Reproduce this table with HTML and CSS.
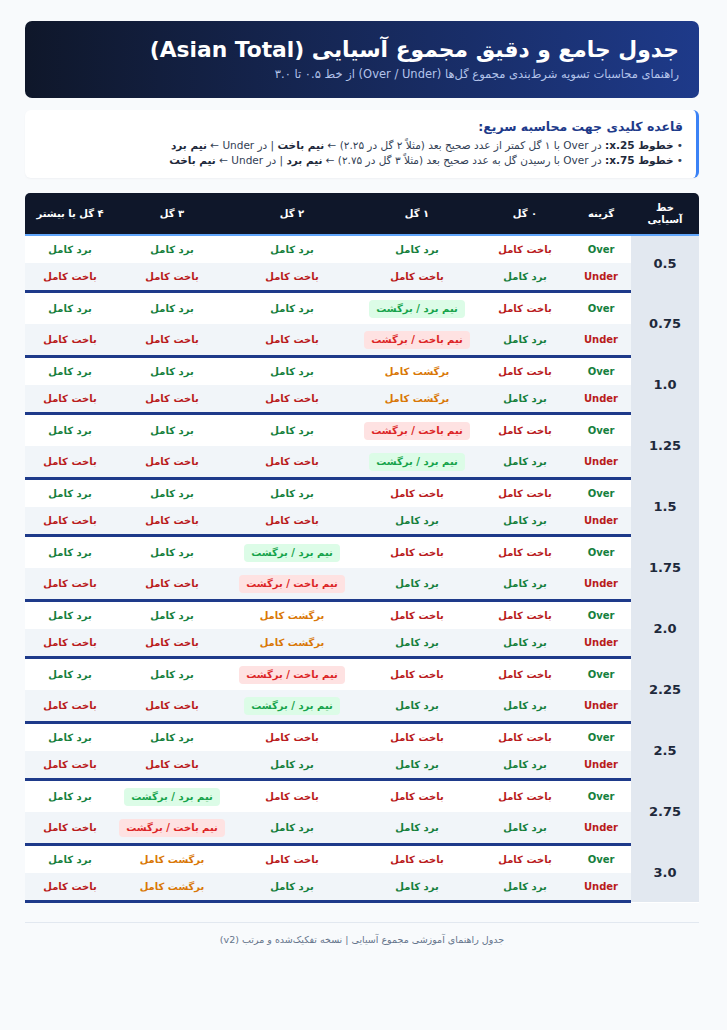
FILE: index.html
```html
<!DOCTYPE html>
<html lang="fa" dir="rtl">
<head>
<meta charset="utf-8">
<title>جدول مجموع آسیایی</title>
<link rel="stylesheet" href="styles.css">
</head>
<body>
<div class="page">
  <header class="hero">
    <h1 class="hero-title">جدول جامع و دقیق مجموع آسیایی (Asian Total)</h1>
    <p class="hero-sub">راهنمای محاسبات تسویه شرط‌بندی مجموع گل‌ها (Over / Under) از خط ۰.۵ تا ۳.۰</p>
  </header>

  <section class="rule">
    <h2 class="rule-title">قاعده کلیدی جهت محاسبه سریع:</h2>
    <p class="rule-line">• <b>خطوط x.25:</b> در Over با ۱ گل کمتر از عدد صحیح بعد (مثلاً ۲ گل در ۲.۲۵) ← <b>نیم باخت</b> | در Under ← <b>نیم برد</b></p>
    <p class="rule-line">• <b>خطوط x.75:</b> در Over با رسیدن گل به عدد صحیح بعد (مثلاً ۳ گل در ۲.۷۵) ← <b>نیم برد</b> | در Under ← <b>نیم باخت</b></p>
  </section>

  <div class="table-wrap">
    <table class="grid">
      <colgroup>
        <col class="c-line"><col class="c-opt"><col class="c-g0"><col class="c-g1"><col class="c-g2"><col class="c-g3"><col class="c-g4">
      </colgroup>
      <thead>
        <tr>
          <th>خط<br>آسیایی</th>
          <th>گزینه</th>
          <th>۰ گل</th>
          <th>۱ گل</th>
          <th>۲ گل</th>
          <th>۳ گل</th>
          <th>۴ گل یا بیشتر</th>
        </tr>
      </thead>
      <tbody id="rows"></tbody>
    </table>
  </div>

  <footer class="foot">جدول راهنمای آموزشی مجموع آسیایی | نسخه تفکیک‌شده و مرتب (v2)</footer>
</div>
<script src="app.js"></script>
</body>
</html>
```

FILE: app.js
```js
var data = [
  ["0.5",  ["L","W","W","W","W"], ["W","L","L","L","L"]],
  ["0.75", ["L","HW","W","W","W"], ["W","HL","L","L","L"]],
  ["1.0",  ["L","P","W","W","W"], ["W","P","L","L","L"]],
  ["1.25", ["L","HL","W","W","W"], ["W","HW","L","L","L"]],
  ["1.5",  ["L","L","W","W","W"], ["W","W","L","L","L"]],
  ["1.75", ["L","L","HW","W","W"], ["W","W","HL","L","L"]],
  ["2.0",  ["L","L","P","W","W"], ["W","W","P","L","L"]],
  ["2.25", ["L","L","HL","W","W"], ["W","W","HW","L","L"]],
  ["2.5",  ["L","L","L","W","W"], ["W","W","W","L","L"]],
  ["2.75", ["L","L","L","HW","W"], ["W","W","W","HL","L"]],
  ["3.0",  ["L","L","L","P","W"], ["W","W","W","P","L"]]
];
var map = {
  W: '<span class="win">برد کامل</span>',
  L: '<span class="lose">باخت کامل</span>',
  P: '<span class="push">برگشت کامل</span>',
  HW: '<span class="badge badge-win">نیم برد / برگشت</span>',
  HL: '<span class="badge badge-lose">نیم باخت / برگشت</span>'
};
var html = "";
data.forEach(function (g) {
  html += '<tr class="row-over"><td class="line" rowspan="2">' + g[0] + '</td><td class="opt over">Over</td>';
  g[1].forEach(function (c) { html += "<td>" + map[c] + "</td>"; });
  html += '</tr><tr class="row-under"><td class="opt under">Under</td>';
  g[2].forEach(function (c) { html += "<td>" + map[c] + "</td>"; });
  html += "</tr>";
});
document.getElementById("rows").innerHTML = html;
```

FILE: styles.css
```css
* { box-sizing: border-box; }
html, body { margin: 0; padding: 0; }
body {
  background: #f8fafc;
  font-family: "DejaVu Sans", "Noto Sans", sans-serif;
  color: #1e293b;
}
.page {
  padding: 21px 28px 40px 25px;
}
.hero {
  background: linear-gradient(90deg, #0f172a 0%, #1e3a8a 100%);
  border-radius: 7px;
  padding: 14px 20px 14px;
  color: #fff;
  height: 77px;
}
.hero-title {
  margin: 0;
  font-size: 21.8px;
  line-height: 29px;
  font-weight: bold;
}
.hero-sub {
  margin: 2px 0 0;
  font-size: 11.5px;
  line-height: 16px;
  color: #b3c3ea;
}
.rule {
  margin-top: 12px;
  background: #fff;
  border-right: 3px solid #3b82f6;
  border-radius: 6px;
  padding: 8px 13px 9px;
  height: 68px;
  box-shadow: 0 1px 2px rgba(15, 23, 42, 0.04);
}
.rule-title {
  margin: 0 0 3px;
  font-size: 12.5px;
  line-height: 17px;
  color: #1e3a8a;
  font-weight: bold;
}
.rule-line {
  margin: 0;
  font-size: 10.5px;
  line-height: 15px;
  color: #334155;
}
.rule-line b { color: #1e293b; }
.table-wrap {
  margin-top: 15px;
  border-radius: 5px 5px 0 0;
  overflow: hidden;
  background: #fff;
}
.grid {
  width: 100%;
  border-collapse: collapse;
  table-layout: fixed;
  text-align: center;
}
.c-line { width: 68px; }
.c-opt { width: 60px; }
.c-g0 { width: 92px; }
.c-g1 { width: 124px; }
.c-g2 { width: 126px; }
.c-g3 { width: 114px; }
.c-g4 { width: 90px; }
.grid th {
  background: #0f172a;
  color: #fff;
  font-size: 10px;
  line-height: 12px;
  font-weight: bold;
  height: 42px;
  padding: 0 4px;
  border-bottom: 2px solid #60a5fa;
}
.grid td {
  font-size: 10px;
  line-height: 14px;
  font-weight: bold;
  padding: 6.5px 2px;
  vertical-align: middle;
  white-space: nowrap;
}
.row-over td { background: #fff; }
.row-under td { background: #f1f5f9; border-bottom: 3px solid #1e3a8a; }
.grid td.line {
  background: #e2e8f0;
  font-size: 13px;
  color: #1e293b;
  border-bottom: 0;
}
.over { color: #15803d; }
.under { color: #b91c1c; }
.win { color: #15803d; }
.lose { color: #b91c1c; }
.push { color: #d97706; }
.badge {
  display: inline-block;
  vertical-align: middle;
  padding: 2px 7px;
  border-radius: 4px;
  line-height: 14px;
}
.badge-win { background: #dcfce7; color: #16a34a; }
.badge-lose { background: #fee2e2; color: #dc2626; }
.foot {
  margin-top: 19px;
  border-top: 1px solid #e2e8f0;
  padding-top: 10px;
  text-align: center;
  font-size: 9.5px;
  line-height: 14px;
  color: #64748b;
}
```
